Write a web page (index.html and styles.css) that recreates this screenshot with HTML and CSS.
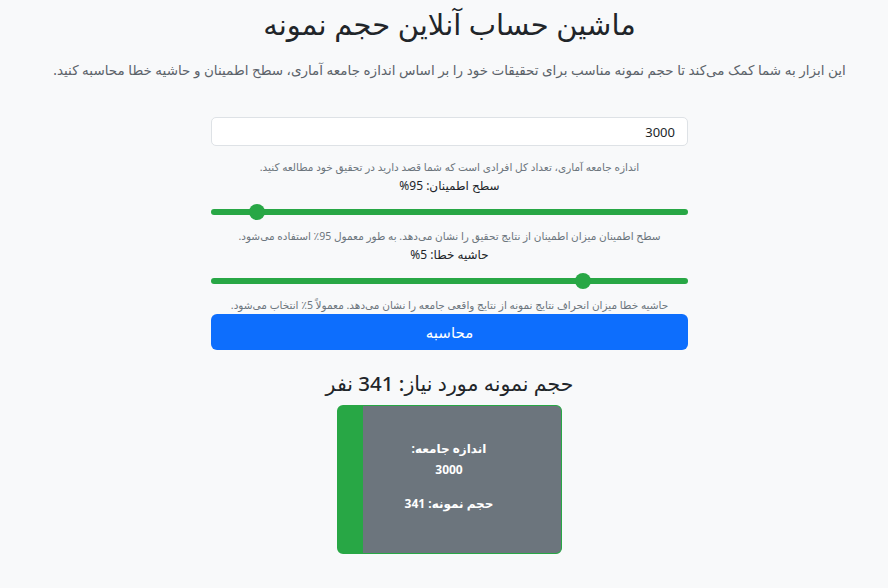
FILE: index.html
```html
<!DOCTYPE html>
<html lang="fa" dir="rtl">
<head>
    <meta charset="utf-8">
    <title>ماشین حساب آنلاین حجم نمونه</title>
    <link rel="stylesheet" href="styles.css">
</head>
<body>
    <div class="container">
        <h1 class="title">ماشین حساب آنلاین حجم نمونه</h1>
        <p class="lead">این ابزار به شما کمک می‌کند تا حجم نمونه مناسب برای تحقیقات خود را بر اساس اندازه جامعه آماری، سطح اطمینان و حاشیه خطا محاسبه کنید.</p>

        <!-- Calculator form -->
        <form class="calc-form">
            <input type="number" class="form-control" id="population" value="3000">
            <small class="help">اندازه جامعه آماری، تعداد کل افرادی است که شما قصد دارید در تحقیق خود مطالعه کنید.</small>

            <label class="field-label" for="confidence">سطح اطمینان: 95%</label>
            <input type="range" class="slider" id="confidence" min="50" max="99" value="95">
            <small class="help">سطح اطمینان میزان اطمینان از نتایج تحقیق را نشان می‌دهد. به طور معمول 95٪ استفاده می‌شود.</small>

            <label class="field-label" for="margin">حاشیه خطا: 5%</label>
            <input type="range" class="slider" id="margin" min="1" max="20" value="5">
            <small class="help">حاشیه خطا میزان انحراف نتایج نمونه از نتایج واقعی جامعه را نشان می‌دهد. معمولاً 5٪ انتخاب می‌شود.</small>

            <button type="button" class="btn-calc">محاسبه</button>
        </form>

        <!-- Result -->
        <h3 class="result-title">حجم نمونه مورد نیاز: 341 نفر</h3>
        <div class="result-card">
            <p>اندازه جامعه:<br>3000</p>
            <p>حجم نمونه: 341</p>
        </div>
    </div>
</body>
</html>
```

FILE: styles.css
```css
/* General Styles */
body {
    font-family: "Noto Sans", "DejaVu Sans", sans-serif;
    margin: 0;
    padding: 0;
    background-color: #f8f9fa;
    color: #212529;
}

.container {
    text-align: center;
    padding-top: 4px;
    padding-left: 11px;
}

.title {
    font-size: 29px;
    font-weight: 500;
    margin: 0 0 16px;
    line-height: 40px;
}

.lead {
    font-size: 13.5px;
    color: #5c636a;
    margin: 0 0 37px;
    line-height: 20px;
}

/* Form */
.calc-form {
    width: 477px;
    margin: 0 auto;
}

.form-control {
    display: block;
    box-sizing: border-box;
    width: 100%;
    height: 29px;
    padding: 4px 12px;
    font-family: inherit;
    font-size: 13px;
    color: #212529;
    background-color: #fff;
    border: 1px solid #dee2e6;
    border-radius: 5px;
    text-align: right;
    margin-bottom: 14px;
}

.help {
    display: block;
    font-size: 10.5px;
    line-height: 14px;
    color: #6c757d;
}

.field-label {
    display: block;
    font-size: 12px;
    line-height: 18px;
    margin-top: 3px;
}

.slider {
    -webkit-appearance: none;
    appearance: none;
    display: block;
    width: 100%;
    height: 6px;
    margin: 14px 0 14px;
    background: #28a745;
    border-radius: 3px;
    outline: none;
}

.slider::-webkit-slider-thumb {
    -webkit-appearance: none;
    appearance: none;
    width: 16px;
    height: 16px;
    border-radius: 50%;
    background: #28a745;
    border: none;
}

.btn-calc {
    display: block;
    width: 100%;
    height: 36px;
    margin-top: 2px;
    font-family: inherit;
    font-size: 15px;
    color: #fff;
    background-color: #0d6efd;
    border: none;
    border-radius: 6px;
}

/* Result */
.result-title {
    font-size: 20.5px;
    font-weight: 500;
    margin: 19px 0 8px;
    line-height: 28px;
}

.result-card {
    box-sizing: border-box;
    width: 225px;
    height: 149px;
    margin: 0 auto;
    padding: 32px 26px 0 0;
    background-color: #6c757d;
    border: 1px solid #28a745;
    border-left: 26px solid #28a745;
    border-radius: 6px;
    color: #fff;
    font-weight: bold;
    font-size: 12px;
}

.result-card p {
    margin: 0 0 13px;
    line-height: 21px;
}
```
